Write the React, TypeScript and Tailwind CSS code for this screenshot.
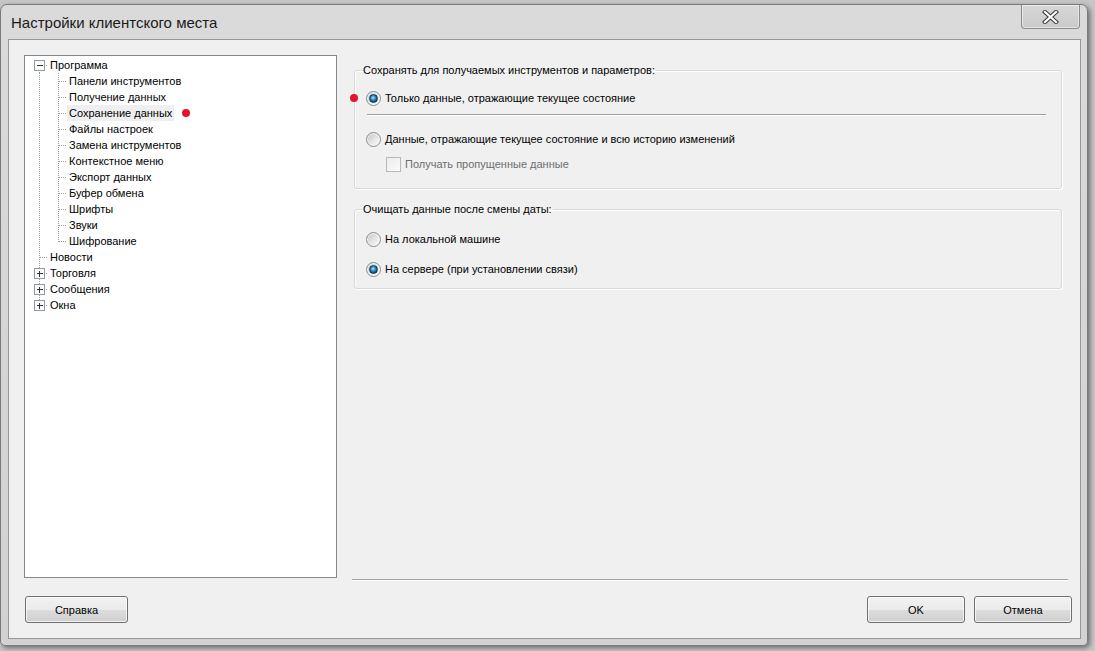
import React from "react";

type CellKind = "first" | "mid" | "last" | "pass" | "none";

function Cell({ kind, box }: { kind: CellKind; box?: "plus" | "minus" }) {
  const c = "#9a9a9a";
  return (
    <svg width="19" height="16" viewBox="0 0 19 16" className="shrink-0" shapeRendering="crispEdges">
      {(kind === "mid" || kind === "pass") && (
        <line x1="10.5" y1="0" x2="10.5" y2="16" stroke={c} strokeDasharray="1 1" />
      )}
      {kind === "first" && <line x1="10.5" y1="9" x2="10.5" y2="16" stroke={c} strokeDasharray="1 1" />}
      {kind === "last" && <line x1="10.5" y1="0" x2="10.5" y2="9" stroke={c} strokeDasharray="1 1" />}
      {kind !== "pass" && kind !== "none" && (
        <line x1="11" y1="8.5" x2="19" y2="8.5" stroke={c} strokeDasharray="1 1" />
      )}
      {box && (
        <g>
          <rect x="5.5" y="3.5" width="10" height="10" fill="#fbfbfb" stroke="#8f9aa6" />
          <line x1="7.5" y1="8.5" x2="14" y2="8.5" stroke="#333" />
          {box === "plus" && <line x1="10.5" y1="5.5" x2="10.5" y2="12" stroke="#333" />}
        </g>
      )}
    </svg>
  );
}

type TreeRow = {
  label: string;
  cells: CellKind[];
  box?: "plus" | "minus";
  selected?: boolean;
};

const rows: TreeRow[] = [
  { label: "Программа", cells: ["first"], box: "minus" },
  { label: "Панели инструментов", cells: ["pass", "mid"] },
  { label: "Получение данных", cells: ["pass", "mid"] },
  { label: "Сохранение данных", cells: ["pass", "mid"], selected: true },
  { label: "Файлы настроек", cells: ["pass", "mid"] },
  { label: "Замена инструментов", cells: ["pass", "mid"] },
  { label: "Контекстное меню", cells: ["pass", "mid"] },
  { label: "Экспорт данных", cells: ["pass", "mid"] },
  { label: "Буфер обмена", cells: ["pass", "mid"] },
  { label: "Шрифты", cells: ["pass", "mid"] },
  { label: "Звуки", cells: ["pass", "mid"] },
  { label: "Шифрование", cells: ["pass", "last"] },
  { label: "Новости", cells: ["mid"] },
  { label: "Торговля", cells: ["mid"], box: "plus" },
  { label: "Сообщения", cells: ["mid"], box: "plus" },
  { label: "Окна", cells: ["last"], box: "plus" },
];

function Radio({ checked }: { checked?: boolean }) {
  return (
    <span className="w-[15px] h-[15px] rounded-full border border-[#8a8d91] bg-[linear-gradient(135deg,#c4c4c4,#e6e6e6_55%,#ffffff)] flex items-center justify-center shrink-0 shadow-[inset_0_0_0_1px_rgba(255,255,255,0.7)]">
      {checked && (
        <span className="w-[9px] h-[9px] rounded-full bg-[radial-gradient(circle_at_45%_40%,#a8ecff,#2a8ac0_40%,#0b3a5e_80%)] border border-[#0f3655]" />
      )}
    </span>
  );
}

function Button({ label, w }: { label: string; w: string }) {
  return (
    <button
      className={`${w} h-[27px] rounded-[3px] border border-[#707070] bg-[linear-gradient(#f2f2f2,#ebebeb_50%,#dddddd_51%,#cfcfcf)] text-[11px] text-black shadow-[inset_0_0_0_1px_rgba(255,255,255,0.7)] flex items-center justify-center pt-[1px]`}
    >
      {label}
    </button>
  );
}

export default function App() {
  return (
    <div className="w-[1095px] h-[651px] bg-[#c6c6c6] overflow-hidden font-['Liberation_Sans',Arial,sans-serif] text-black">
      <div className="mt-[4px] w-[1088px] h-[642px] rounded-t-[7px] rounded-b-[5px] border border-[#7a7a7a] bg-[linear-gradient(#dadada,#d2d2d2)] flex flex-col px-[7px] shadow-[2px_2px_5px_rgba(0,0,0,0.45)]">
        {/* Title bar */}
        <div className="h-[34px] flex justify-between shrink-0">
          <div className="self-center pl-[3px] text-[15px] text-[#1a1a1a] leading-none mt-[1px]">
            Настройки клиентского места
          </div>
          <div className="w-[59px] h-[24px] rounded-b-[4px] border border-t-0 border-[#8a8a8a] bg-[linear-gradient(#d7d7d7,#cacaca)] flex items-center justify-center shadow-[inset_0_0_0_1px_rgba(255,255,255,0.5)]">
            <svg width="17" height="14" viewBox="0 0 17 14">
              <path d="M3 2 L14 12 M14 2 L3 12" stroke="#3c3c3c" strokeWidth="4.2" strokeLinecap="square" />
              <path d="M3 2 L14 12 M14 2 L3 12" stroke="#ffffff" strokeWidth="2.2" strokeLinecap="square" />
            </svg>
          </div>
        </div>

        {/* Client area */}
        <div className="w-[1073px] h-[600px] border border-[#979797] bg-[#f0f0f0] flex flex-col">
          <div className="h-[526px] mt-[15px] flex pl-[15px] pr-[12px]">
            {/* Tree */}
            <div className="w-[313px] h-[523px] border border-[#828790] bg-white pt-[1px] pl-[4px] text-[11px]">
              {rows.map((r) => (
                <div key={r.label} className="h-[16px] flex items-center">
                  {r.cells.map((k, i) => (
                    <Cell key={i} kind={k} box={i === 0 ? r.box : undefined} />
                  ))}
                  <span className={`h-[16px] px-[2px] flex items-center whitespace-nowrap ${r.selected ? "bg-[#efefef]" : ""}`}>
                    {r.label}
                  </span>
                  {r.selected && <span className="ml-[8px] w-[8px] h-[8px] rounded-full bg-[#e3142c]" />}
                </div>
              ))}
            </div>

            {/* Right column */}
            <div className="ml-[15px] w-[716px] flex flex-col text-[11px]">
              <fieldset className="mt-[9px] ml-[2px] w-[708px] h-[125px] border border-[#d9d9d9] rounded-[3px] shadow-[inset_1px_1px_0_#ffffff,1px_1px_0_#ffffff]">
                <legend className="ml-[7px] px-[1px] leading-[13px]">
                  Сохранять для получаемых инструментов и параметров:
                </legend>
                <div className="relative mt-[13px] h-[16px] pl-[11px] flex items-center gap-[4px]">
                  <span className="absolute left-[-5px] top-[4px] w-[8px] h-[8px] rounded-full bg-[#e3142c]" />
                  <Radio checked />
                  <span>Только данные, отражающие текущее состояние</span>
                </div>
                <div className="mt-[8px] ml-[12px] w-[679px] h-[2px] border-t border-[#a0a0a0] border-b border-b-white" />
                <div className="mt-[15px] h-[16px] pl-[11px] flex items-center gap-[4px]">
                  <Radio />
                  <span>Данные, отражающие текущее состояние и всю историю изменений</span>
                </div>
                <div className="mt-[9px] h-[16px] pl-[31px] flex items-center gap-[4px]">
                  <span className="w-[15px] h-[15px] border border-[#b8b8b8] bg-[linear-gradient(135deg,#ececec,#fbfbfb)] shrink-0" />
                  <span className="text-[#6d6d6d]">Получать пропущенные данные</span>
                </div>
              </fieldset>

              <fieldset className="mt-[14px] ml-[2px] w-[708px] h-[86px] border border-[#d9d9d9] rounded-[3px] shadow-[inset_1px_1px_0_#ffffff,1px_1px_0_#ffffff]">
                <legend className="ml-[7px] px-[1px] leading-[13px]">Очищать данные после смены даты:</legend>
                <div className="mt-[15px] h-[16px] pl-[11px] flex items-center gap-[4px]">
                  <Radio />
                  <span>На локальной машине</span>
                </div>
                <div className="mt-[14px] h-[16px] pl-[11px] flex items-center gap-[4px]">
                  <Radio checked />
                  <span>На сервере (при установлении связи)</span>
                </div>
              </fieldset>

              <div className="mt-auto h-[2px] border-t border-[#a0a0a0] border-b border-b-white" />
            </div>
          </div>

          {/* Buttons */}
          <div className="mt-[15px] flex items-center pl-[16px] pr-[8px]">
            <Button label="Справка" w="w-[103px]" />
            <div className="ml-auto flex gap-[9px]">
              <Button label="OK" w="w-[98px]" />
              <Button label="Отмена" w="w-[98px]" />
            </div>
          </div>
        </div>
      </div>
    </div>
  );
}
